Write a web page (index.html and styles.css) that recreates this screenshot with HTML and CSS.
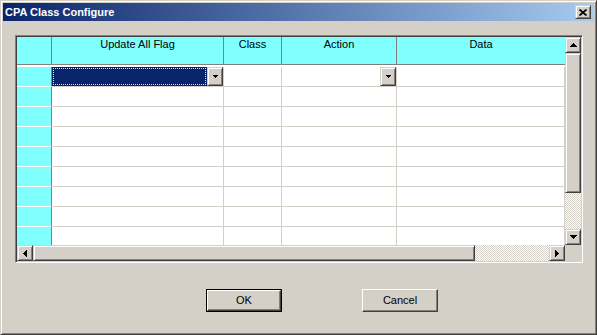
FILE: index.html
```html
<!DOCTYPE html>
<html>
<head>
<meta charset="utf-8">
<title>CPA Class Configure</title>
<link rel="stylesheet" href="styles.css">
</head>
<body>
<div class="dialog">
  <div class="titlebar">
    <span class="title">CPA Class Configure</span>
    <span class="close raised"><svg width="8" height="7" viewBox="0 0 8 7"><path d="M0.5 0.5 L7.5 6.5 M7.5 0.5 L0.5 6.5" stroke="#000" stroke-width="1.7" fill="none"/></svg></span>
  </div>
  <div class="content">
    <div class="gridframe">
      <div class="gridinner">
        <div class="table">
          <div class="row head">
            <div class="c c0"></div>
            <div class="c c1">Update All Flag</div>
            <div class="c c2">Class</div>
            <div class="c c3">Action</div>
            <div class="c c4">Data</div>
          </div>
          <div class="row">
            <div class="c c0"></div>
            <div class="c c1 cbox"><div class="sel"><div class="focus"></div></div><div class="dd raised"><svg width="5" height="3" viewBox="0 0 5 3"><path d="M0 0H5L2.5 3Z" fill="#000"/></svg></div></div>
            <div class="c c2"></div>
            <div class="c c3 cbox"><div class="fill"></div><div class="dd raised"><svg width="5" height="3" viewBox="0 0 5 3"><path d="M0 0H5L2.5 3Z" fill="#000"/></svg></div></div>
            <div class="c c4"></div>
          </div>
          <div class="row"><div class="c c0"></div><div class="c c1"></div><div class="c c2"></div><div class="c c3"></div><div class="c c4"></div></div>
          <div class="row"><div class="c c0"></div><div class="c c1"></div><div class="c c2"></div><div class="c c3"></div><div class="c c4"></div></div>
          <div class="row"><div class="c c0"></div><div class="c c1"></div><div class="c c2"></div><div class="c c3"></div><div class="c c4"></div></div>
          <div class="row"><div class="c c0"></div><div class="c c1"></div><div class="c c2"></div><div class="c c3"></div><div class="c c4"></div></div>
          <div class="row"><div class="c c0"></div><div class="c c1"></div><div class="c c2"></div><div class="c c3"></div><div class="c c4"></div></div>
          <div class="row"><div class="c c0"></div><div class="c c1"></div><div class="c c2"></div><div class="c c3"></div><div class="c c4"></div></div>
          <div class="row"><div class="c c0"></div><div class="c c1"></div><div class="c c2"></div><div class="c c3"></div><div class="c c4"></div></div>
          <div class="row"><div class="c c0"></div><div class="c c1"></div><div class="c c2"></div><div class="c c3"></div><div class="c c4"></div></div>
        </div>
        <div class="vscroll">
          <div class="sbtn raised"><svg width="7" height="4" viewBox="0 0 7 4"><path d="M3.5 0L7 4H0Z" fill="#000"/></svg></div>
          <div class="vthumb raised"></div>
          <div class="track"></div>
          <div class="sbtn raised"><svg width="7" height="4" viewBox="0 0 7 4"><path d="M0 0H7L3.5 4Z" fill="#000"/></svg></div>
        </div>
        <div class="hscroll">
          <div class="sbtn raised"><svg width="4" height="7" viewBox="0 0 4 7"><path d="M0 3.5L4 0V7Z" fill="#000"/></svg></div>
          <div class="hthumb raised"></div>
          <div class="track"></div>
          <div class="sbtn raised"><svg width="4" height="7" viewBox="0 0 4 7"><path d="M0 0L4 3.5L0 7Z" fill="#000"/></svg></div>
        </div>
        <div class="corner"></div>
      </div>
    </div>
    <div class="buttons">
      <div class="btn default"><div class="btnface">OK</div></div>
      <div class="btn"><div class="btnface">Cancel</div></div>
    </div>
  </div>
</div>
</body>
</html>
```
FILE: styles.css
```css
html, body {
  margin: 0;
  padding: 0;
  background: #d4d0c8;
}
body {
  font-family: "Liberation Sans", Arial, sans-serif;
  font-size: 11px;
  color: #000;
}
.dialog {
  box-sizing: border-box;
  width: 597px;
  height: 335px;
  background: #d4d0c8;
  border: 1px solid;
  border-color: #d4d0c8 #404040 #404040 #d4d0c8;
  box-shadow: inset 1px 1px 0 #fff, inset -1px -1px 0 #808080;
  padding: 2px;
  display: flex;
  flex-direction: column;
}
.titlebar {
  height: 18px;
  display: flex;
  align-items: center;
  justify-content: space-between;
  padding-left: 2px;
  background: linear-gradient(to right, #0a246a, #a6caf0);
}
.title {
  color: #fff;
  font-weight: bold;
  font-size: 11px;
  line-height: 14px;
}
.raised {
  box-sizing: border-box;
  background: #d4d0c8;
  border: 1px solid;
  border-color: #d4d0c8 #404040 #404040 #d4d0c8;
  box-shadow: inset 1px 1px 0 #fff, inset -1px -1px 0 #808080;
  display: flex;
  align-items: center;
  justify-content: center;
}
.raised svg {
  display: block;
  shape-rendering: crispEdges;
}
.close {
  width: 16px;
  height: 14px;
  margin-right: 3px;
}
.close svg {
  shape-rendering: auto;
}
.content {
  flex: 1;
  display: flex;
  flex-direction: column;
}
.gridframe {
  box-sizing: border-box;
  width: 568px;
  height: 228px;
  margin: 14px 0 0 12px;
  border: 1px solid;
  border-color: #808080 #fff #fff #808080;
  box-shadow: inset 1px 1px 0 #404040, inset -1px -1px 0 #d4d0c8;
  padding: 1px;
}
.gridinner {
  display: grid;
  grid-template-columns: 548px 16px;
  grid-template-rows: 208px 16px;
  background: #fff;
}
.table {
  overflow: hidden;
  background: #fff;
}
.row {
  display: flex;
  height: 20px;
}
.c {
  box-sizing: border-box;
  height: 20px;
  border-right: 1px solid #d4d0c8;
  border-bottom: 1px solid #d4d0c8;
  background: #fff;
  flex: none;
}
.c0 {
  width: 35px;
  background: #80ffff;
  border-right-color: #808080;
  border-bottom-color: #fff;
}
.c1 { width: 172px; }
.c2 { width: 58px; }
.c3 { width: 115px; }
.c4 { width: 168px; }
.row.head {
  height: 29px;
  border-bottom: 1px solid #fff;
}
.head .c {
  height: 28px;
  background: #80ffff;
  border-right-color: #808080;
  border-bottom-color: #808080;
  text-align: center;
  line-height: 13px;
  padding-top: 1px;
}
.head .c4 {
  border-right: none;
}
.cbox {
  display: flex;
}
.sel {
  flex: 1;
  background: #0a246a;
  padding: 1px;
  display: flex;
}
.focus {
  flex: 1;
  border: 1px dotted #f2e4a8;
}
.fill {
  flex: 1;
}
.dd {
  width: 16px;
  height: 19px;
  flex: none;
}
.vscroll {
  display: flex;
  flex-direction: column;
  background: #d4d0c8;
}
.hscroll {
  display: flex;
  background: #d4d0c8;
}
.sbtn {
  width: 16px;
  height: 16px;
  flex: none;
}
.vthumb {
  height: 140px;
  width: 16px;
  flex: none;
}
.hthumb {
  width: 442px;
  height: 16px;
  flex: none;
}
.track {
  flex: 1;
  background-color: #fff;
  background-image: conic-gradient(#fff 25%, #d4d0c8 0 50%, #fff 0 75%, #d4d0c8 0);
  background-size: 2px 2px;
}
.corner {
  background: #d4d0c8;
}
.buttons {
  display: flex;
  margin: 26px 0 0 203px;
  gap: 80px;
}
.btn {
  box-sizing: border-box;
  width: 76px;
  height: 23px;
  border: 1px solid;
  border-color: #fff #404040 #404040 #fff;
  background: #d4d0c8;
  display: flex;
}
.btnface {
  flex: 1;
  box-shadow: inset -1px -1px 0 #808080;
  display: flex;
  align-items: center;
  justify-content: center;
  line-height: 13px;
}
.btn.default {
  border: 1px solid #000;
}
.btn.default .btnface {
  border: 1px solid;
  border-color: #fff #404040 #404040 #fff;
  box-shadow: inset -1px -1px 0 #808080;
}
```
